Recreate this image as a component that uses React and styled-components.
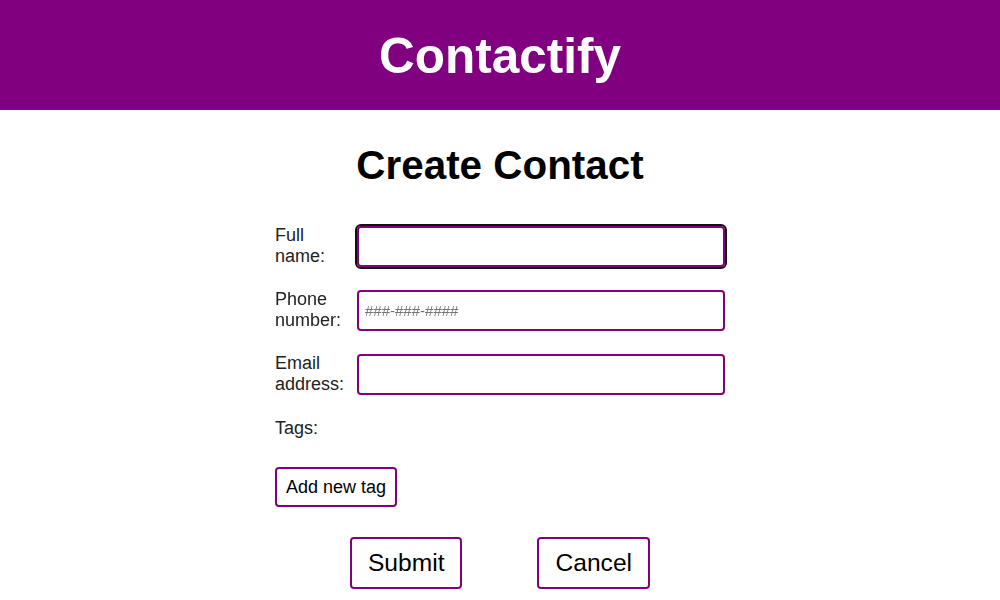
import React from 'react';
import styled, { createGlobalStyle } from 'styled-components';

const GlobalStyle = createGlobalStyle`
  body {
    margin: 0;
    font-family: "Liberation Sans", Arial, sans-serif;
    background: #fff;
    color: #111;
  }
`;

const Header = styled.header`
  height: 110px;
  background: #800080;
  display: flex;
  align-items: center;
  justify-content: center;
`;

const Logo = styled.h1`
  margin: 0;
  color: #fff;
  font-size: 49.5px;
  font-weight: bold;
`;

const Main = styled.main`
  display: flex;
  flex-direction: column;
  align-items: center;
`;

const Title = styled.h2`
  margin: 32px 0 36px;
  font-size: 40.4px;
  font-weight: bold;
  color: #000;
`;

const Form = styled.form`
  width: 450px;
  display: flex;
  flex-direction: column;
`;

const Row = styled.div`
  display: flex;
  align-items: center;
  gap: 12px;
  margin-bottom: 22px;
`;

const Label = styled.label`
  width: 70px;
  flex-shrink: 0;
  font-size: 18px;
  line-height: 21px;
  color: #222;
`;

const Input = styled.input`
  flex: 1;
  height: 41px;
  box-sizing: border-box;
  border: 2px solid #800080;
  border-radius: 4px;
  padding: 0 6px;
  font-family: "Liberation Sans", Arial, sans-serif;
  font-size: 15px;
  color: #111;
  background: #fff;

  &::placeholder {
    color: #757575;
  }

  &:focus {
    outline: 2px solid #101010;
    outline-offset: 0;
  }
`;

const TagsLabel = styled.div`
  font-size: 18px;
  line-height: 20px;
  color: #222;
  margin: 1px 0 29px;
`;

const Button = styled.button`
  background: #fff;
  border: 2px solid #800080;
  border-radius: 4px;
  color: #000;
  font-family: "Liberation Sans", Arial, sans-serif;
  cursor: pointer;
  font-size: ${(p) => (p.$big ? '24.6px' : '18px')};
  padding: ${(p) => (p.$big ? '11px 16px' : '8px 9px')};
  line-height: ${(p) => (p.$big ? '26px' : '20px')};
`;

const TagBar = styled.div`
  display: flex;
  margin-bottom: 30px;
`;

const Actions = styled.div`
  display: flex;
  justify-content: center;
  gap: 75px;
`;

const App = () => {
  return (
    <>
      <GlobalStyle />
      <Header>
        <Logo>Contactify</Logo>
      </Header>
      <Main>
        <Title>Create Contact</Title>
        <Form onSubmit={(e) => e.preventDefault()}>
          <Row>
            <Label htmlFor="name">Full name:</Label>
            <Input id="name" type="text" autoFocus />
          </Row>
          <Row>
            <Label htmlFor="phone">Phone number:</Label>
            <Input id="phone" type="tel" placeholder="###-###-####" />
          </Row>
          <Row>
            <Label htmlFor="email">Email address:</Label>
            <Input id="email" type="email" />
          </Row>
          <TagsLabel>Tags:</TagsLabel>
          <TagBar>
            <Button type="button">Add new tag</Button>
          </TagBar>
          <Actions>
            <Button $big type="submit">Submit</Button>
            <Button $big type="button">Cancel</Button>
          </Actions>
        </Form>
      </Main>
    </>
  );
};

export default App;
